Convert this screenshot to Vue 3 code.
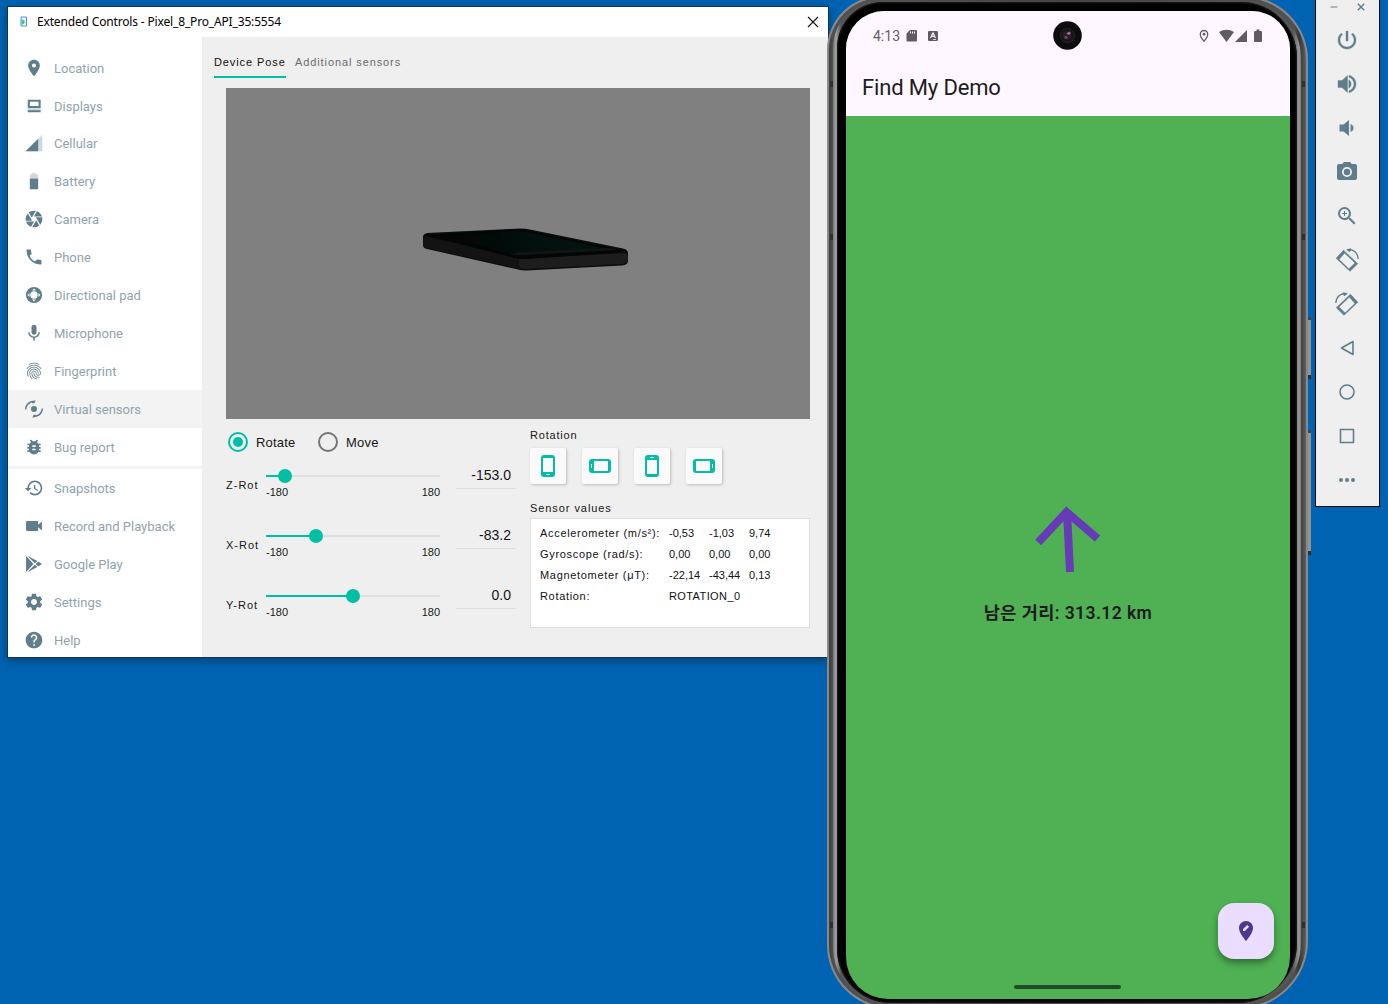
<script setup>
const pin = 'M12 2C8.13 2 5 5.13 5 9c0 5.25 7 13 7 13s7-7.75 7-13c0-3.87-3.13-7-7-7zm0 9.500a2.500 2.500 0 0 1 0-5 2.500 2.500 0 0 1 0 5z'
const menu = [
  { label: 'Location', paths: [pin] },
  { label: 'Displays', paths: ['M4.500 4.500h15.500v10H4.500zM7 7v5h10.500V7z', 'M4.500 17h15.500v2.500H4.500z'], faint: 'M4.500 14.500h15.500v2.500H4.500z' },
  { label: 'Cellular', paths: ['M17 7L2 22h15z'], faint: 'M2 22h20V2z', cls: 'pull' },
  { label: 'Battery', paths: ['M7 9v11.670C7 21.400 7.600 22 8.330 22h7.330c.740 0 1.340-.600 1.340-1.330V9H7z'], faint: 'M17 5.330C17 4.600 16.400 4 15.670 4H14V2h-4v2H8.330C7.600 4 7 4.600 7 5.330V9h10z' },
  { label: 'Camera', paths: ['M9.4 10.5l4.77-8.26C13.47 2.09 12.75 2 12 2c-2.4 0-4.6.85-6.32 2.25l3.66 6.35.06-.1zM21.54 9c-.92-2.92-3.15-5.26-6-6.34L11.88 9h9.66zm.26 1h-7.49l.29.5 4.76 8.25C21 16.97 22 14.61 22 12c0-.69-.07-1.35-.2-2zM8.54 12l-3.9-6.75C3.01 7.03 2 9.39 2 12c0 .69.07 1.35.2 2h7.49l-1.15-2zm-6.08 3c.92 2.92 3.15 5.26 6 6.34L12.12 15H2.46zm11.27 0l-3.9 6.76c.7.15 1.42.24 2.17.24 2.4 0 4.6-.85 6.32-2.25l-3.66-6.35-.93 1.6z'] },
  { label: 'Phone', paths: ['M6.62 10.79c1.44 2.83 3.76 5.14 6.59 6.59l2.2-2.2c.27-.27.67-.36 1.02-.24 1.12.37 2.33.57 3.57.57.55 0 1 .45 1 1V20c0 .55-.45 1-1 1-9.39 0-17-7.61-17-17 0-.55.45-1 1-1h3.5c.55 0 1 .45 1 1 0 1.25.2 2.45.57 3.57.11.35.03.74-.25 1.02l-2.2 2.2z'] },
  { label: 'Directional pad', paths: ['M12 2.300a9.700 9.700 0 1 0 0 19.400 9.700 9.700 0 0 0 0-19.400zM12 7.600a4.400 4.400 0 1 1 0 8.800 4.400 4.400 0 0 1 0-8.800zM12 4.300l2.300 2.300H9.700zM12 19.700l-2.300-2.300h4.600zM4.300 12l2.300-2.300v4.600zM19.700 12l-2.300 2.300V9.700z'] },
  { label: 'Microphone', paths: ['M12 14c1.66 0 2.99-1.34 2.99-3L15 5c0-1.66-1.34-3-3-3S9 3.34 9 5v6c0 1.66 1.34 3 3 3zm5.3-3c0 3-2.54 5.1-5.3 5.1S6.7 14 6.7 11H5c0 3.41 2.72 6.23 6 6.72V21h2v-3.28c3.28-.48 6-3.3 6-6.72h-1.7z'] },
  { label: 'Fingerprint', paths: ['M17.81 4.47c-.08 0-.16-.02-.23-.06C15.66 3.42 14 3 12.01 3c-1.98 0-3.86.47-5.57 1.41-.24.13-.54.04-.68-.2-.13-.24-.04-.55.2-.68C7.82 2.52 9.86 2 12.01 2c2.13 0 3.99.47 6.03 1.52.25.13.34.43.21.67-.09.18-.26.28-.44.28zM3.5 9.72c-.1 0-.2-.03-.29-.09-.23-.16-.28-.47-.12-.7.99-1.4 2.25-2.5 3.75-3.27C9.98 4.04 14 4.03 17.15 5.65c1.5.77 2.76 1.86 3.75 3.25.16.22.11.54-.12.7-.23.16-.54.11-.7-.12-.9-1.26-2.04-2.25-3.39-2.94-2.87-1.47-6.54-1.47-9.4.01-1.36.7-2.5 1.7-3.4 2.96-.08.14-.23.21-.39.21zm6.25 12.07c-.13 0-.26-.05-.35-.15-.87-.87-1.34-1.43-2.01-2.64-.69-1.23-1.05-2.73-1.05-4.34 0-2.97 2.54-5.39 5.66-5.39s5.66 2.42 5.66 5.39c0 .28-.22.5-.5.5s-.5-.22-.5-.5c0-2.42-2.09-4.39-4.66-4.39-2.57 0-4.66 1.97-4.66 4.39 0 1.44.32 2.77.93 3.85.64 1.15 1.08 1.64 1.85 2.42.19.2.19.51 0 .71-.11.1-.24.15-.37.15zm7.17-1.85c-1.19 0-2.24-.3-3.1-.89-1.49-1.01-2.38-2.65-2.38-4.39 0-.28.22-.5.5-.5s.5.22.5.5c0 1.41.72 2.74 1.94 3.56.71.48 1.54.71 2.54.71.24 0 .64-.03 1.04-.1.27-.05.53.13.58.41.05.27-.13.53-.41.58-.57.11-1.07.12-1.21.12zM14.91 22c-.04 0-.09-.01-.13-.02-1.59-.44-2.63-1.03-3.72-2.1-1.4-1.39-2.17-3.24-2.17-5.22 0-1.62 1.38-2.94 3.08-2.94 1.7 0 3.08 1.32 3.08 2.94 0 1.07.93 1.94 2.08 1.94s2.08-.87 2.08-1.94c0-3.77-3.25-6.83-7.25-6.83-2.84 0-5.44 1.58-6.61 4.03-.39.81-.59 1.76-.59 2.8 0 .78.07 2.01.67 3.61.1.26-.03.55-.29.64-.26.1-.55-.04-.64-.29-.49-1.31-.73-2.61-.73-3.96 0-1.2.23-2.29.68-3.24 1.33-2.79 4.28-4.6 7.51-4.6 4.55 0 8.25 3.51 8.25 7.83 0 1.62-1.38 2.94-3.08 2.94s-3.08-1.32-3.08-2.94c0-1.07-.93-1.94-2.08-1.94s-2.08.87-2.08 1.94c0 1.71.66 3.31 1.87 4.51.95.94 1.86 1.46 3.27 1.85.27.07.42.35.35.61-.05.23-.26.38-.47.38z'] },
  { label: 'Virtual sensors', active: true, paths: ['M12 8.400a3.600 3.600 0 1 0 0 7.200 3.600 3.600 0 0 0 0-7.200z', 'M1.200 12.500C1.200 7 5.500 2.500 11 2.200L14 1.500 12.500 5 9.500 5 10 4.200C6.300 5 3.200 8.200 2.800 12.500z', 'M22.800 11.500c0 5.500-4.300 10-9.800 10.300l-3 .7 1.500-3.500h3l-.5.800c3.700-.8 6.800-4 7.200-8.300z'] },
  { label: 'Bug report', paths: ['M20 8h-2.81c-.45-.78-1.07-1.45-1.82-1.96L17 4.41 15.59 3l-2.17 2.17C12.96 5.06 12.49 5 12 5c-.49 0-.96.06-1.41.17L8.41 3 7 4.41l1.62 1.63C7.88 6.55 7.26 7.22 6.81 8H4v2h2.09c-.05.33-.09.66-.09 1v1H4v2h2v1c0 .34.04.67.09 1H4v2h2.81c1.04 1.79 2.97 3 5.19 3s4.15-1.21 5.19-3H20v-2h-2.09c.05-.33.09-.66.09-1v-1h2v-2h-2v-1c0-.34-.04-.67-.09-1H20V8zm-6 8h-4v-2h4v2zm0-4h-4v-2h4v2z'] },
  { label: 'Snapshots', cls: 'divided', paths: ['M13 3a9 9 0 0 0-9 9H1l3.89 3.89.07.14L9 12H6c0-3.87 3.13-7 7-7s7 3.13 7 7-3.13 7-7 7c-1.93 0-3.68-.79-4.94-2.06l-1.42 1.42A8.954 8.954 0 0 0 13 21a9 9 0 0 0 0-18zm-1 5v5l4.28 2.54.72-1.21-3.5-2.08V8H12z'] },
  { label: 'Record and Playback', paths: ['M17 10.5V7c0-.55-.45-1-1-1H3.500c-.55 0-1 .45-1 1v10c0 .55.45 1 1 1H16c.55 0 1-.45 1-1v-3.5l4.500 4v-11l-4.500 4z'] },
  { label: 'Google Play', paths: ['M2.500 2.500v19l9-9.500z', 'M4 2l9 9 3-2.700z', 'M4 22l9-9 3 2.700z', 'M17 9l4.500 3-4.500 3-3-3z'] },
  { label: 'Settings', cls: 'gear', paths: ['M19.43 12.98c.04-.32.07-.64.07-.98s-.03-.66-.07-.98l2.110-1.650c.19-.15.24-.42.12-.64l-2-3.460c-.12-.22-.39-.3-.61-.22l-2.490 1c-.52-.4-1.080-.73-1.690-.98l-.38-2.650C14.460 2.180 14.250 2 14 2h-4c-.25 0-.46.18-.49.42l-.38 2.650c-.61.25-1.170.59-1.690.98l-2.490-1c-.23-.09-.49 0-.61.22l-2 3.460c-.13.22-.07.49.12.64l2.110 1.650c-.04.32-.07.65-.07.98s.03.66.07.98l-2.110 1.650c-.19.15-.24.42-.12.64l2 3.460c.12.22.39.3.61.22l2.490-1c.52.4 1.080.73 1.690.98l.38 2.650c.03.24.24.42.49.42h4c.25 0 .46-.18.49-.42l.38-2.650c.61-.25 1.170-.59 1.690-.98l2.490 1c.23.09.49 0 .61-.22l2-3.460c.12-.22.07-.49-.12-.64l-2.110-1.650zM12 15.500c-1.930 0-3.500-1.570-3.500-3.500s1.570-3.500 3.500-3.500 3.500 1.570 3.500 3.500-1.570 3.500-3.500 3.500z'] },
  { label: 'Help', paths: ['M12 2C6.480 2 2 6.480 2 12s4.480 10 10 10 10-4.480 10-10S17.520 2 12 2zm1 17h-2v-2h2v2zm2.070-7.750l-.9.920C13.450 12.900 13 13.500 13 15h-2v-.5c0-1.100.45-2.100 1.170-2.830l1.240-1.260c.37-.36.59-.86.59-1.410 0-1.100-.9-2-2-2s-2 .9-2 2H8c0-2.210 1.790-4 4-4s4 1.790 4 4c0 .88-.36 1.680-.93 2.250z'] }
]
const sliders = [
  { name: 'Z-Rot', value: '-153.0', at: 19 },
  { name: 'X-Rot', value: '-83.2', at: 50 },
  { name: 'Y-Rot', value: '0.0', at: 87 }
]
const turns = [0, 90, 180, 270]
const sensors = [
  ['Accelerometer (m/s²):', '-0,53', '-1,03', '9,74'],
  ['Gyroscope (rad/s):', '0,00', '0,00', '0,00'],
  ['Magnetometer (μT):', '-22,14', '-43,44', '0,13']
]
const marks = [85, 238, 926]
const tools = [
  { f: 'M13 3h-2v10h2V3zm4.830 2.170l-1.420 1.420C17.990 7.860 19 9.810 19 12c0 3.870-3.130 7-7 7s-7-3.130-7-7c0-2.190 1.010-4.140 2.580-5.420L6.170 5.170C4.230 6.820 3 9.260 3 12c0 4.970 4.030 9 9 9s9-4.030 9-9c0-2.740-1.230-5.180-3.170-6.830z', bold: true },
  { f: 'M3 8.500v7h4l5.500 5V3.500L7 8.500H3zm10.800-.8v8.600c1.500-.7 2.300-2.400 2.300-4.300s-.8-3.600-2.300-4.300zM14 3.230v2.060c2.890.86 5 3.540 5 6.710s-2.110 5.850-5 6.710v2.060c4.010-.91 7-4.490 7-8.770s-2.990-7.860-7-8.770z', bold: true },
  { f: 'M4.500 8.500v7h4l5.500 4.500V4L8.500 8.500zM15.500 8v8c1.900-.7 3-2.200 3-4s-1.100-3.300-3-4z' },
  { f: 'M12 8.800a3.200 3.200 0 1 0 0 6.400 3.200 3.200 0 0 0 0-6.400zM9 2L7.170 4H4c-1.100 0-2 .9-2 2v12c0 1.100.9 2 2 2h16c1.100 0 2-.9 2-2V6c0-1.100-.9-2-2-2h-3.170L15 2H9zm3 15a5 5 0 1 1 0-10 5 5 0 0 1 0 10z' },
  { f: 'M15.500 14h-.79l-.28-.27A6.471 6.471 0 0 0 16 9.500 6.500 6.500 0 1 0 9.500 16c1.610 0 3.090-.59 4.230-1.570l.27.28v.79l5 4.990L20.490 19l-4.990-5zm-6 0C7.010 14 5 11.990 5 9.500S7.010 5 9.500 5 14 7.010 14 9.500 11.990 14 9.500 14zM12 10h-2v2H9v-2H7V9h2V7h1v2h2v1z' },
  { rot: true },
  { rot: true, flip: true },
  { l: 'M18 5.500v13L6.500 12z' },
  { l: 'M12 5a7 7 0 1 0 0 14 7 7 0 0 0 0-14z' },
  { l: 'M6 5.500h12.500v13H5.500v-13z' },
  { f: 'M6 10a2 2 0 1 0 0 4 2 2 0 0 0 0-4zm6 0a2 2 0 1 0 0 4 2 2 0 0 0 0-4zm6 0a2 2 0 1 0 0 4 2 2 0 0 0 0-4z' }
]
</script>

<template>
  <div class="desktop">
    <section class="window">
      <header class="titlebar">
        <svg class="appicon" width="8" height="12" viewBox="0 0 8 12"><path d="M1 1h5.500v9H1z" fill="#f4fbff" stroke="#4f8cf5" /><path d="M1.500 3l2.500 1.200 1 1.500-1 2-2.500 1.200z" fill="#36d17b" /></svg>
        <span class="title">Extended Controls - Pixel_8_Pro_API_35:5554</span>
        <svg class="close" width="12" height="12" viewBox="0 0 12 12"><path d="M1 1l10 10M11 1L1 11" stroke="#111" stroke-width="1.100" /></svg>
      </header>
      <div class="body">
        <nav class="side">
          <div v-for="m in menu" :key="m.label" class="item" :class="[m.cls, { active: m.active }]">
            <svg width="20" height="20" viewBox="0 0 24 24" fill="#607d8b" fill-rule="evenodd">
              <path v-if="m.faint" :d="m.faint" opacity=".3" />
              <path v-for="p in m.paths" :key="p" :d="p" />
            </svg>
            <span>{{ m.label }}</span>
          </div>
        </nav>
        <main class="pane">
          <div class="tabs"><span class="tab on">Device Pose</span><span class="tab second">Additional sensors</span></div>
          <div class="scene">
            <svg width="210" height="46" viewBox="0 0 210 46">
              <defs>
                <linearGradient id="glass" x1="0" x2="1"><stop offset="0" stop-color="#020504" /><stop offset=".6" stop-color="#02110f" /><stop offset="1" stop-color="#02140f" /></linearGradient>
              </defs>
              <path d="M5 6Q1 7 1 10v8q0 3 4 4l89 20q5 1.500 11 1.500l95-5q6-.500 6-5v-7q0-4-5-5L108 2.500Q101 1 88 2z" fill="#0c0c0d" />
              <path d="M2 9l94 22q4 1 4 11l-6-1L5 21q-4-1-4-4z" fill="#131313" />
              <path d="M97 32l106-6q3 1 3 4v2q0 4-6 5l-95 5q-8 0-8-4z" fill="#1d1d1d" />
              <path d="M3 8L88 2.500q10-1 17 1l97 20q-5 2-12 2.500l-87 6q-5 0-10-1z" fill="#040505" />
              <path d="M26 9l68-5 10 1 82 17-97 5z" fill="url(#glass)" />
              <path d="M88 28l10-3 92-4 6 2-92 5z" fill="#101514" />
            </svg>
          </div>
          <div class="controls">
            <div class="left">
              <div class="radios">
                <span class="radio on"><i></i></span><span class="rl">Rotate</span>
                <span class="radio"></span><span class="rl">Move</span>
              </div>
              <div v-for="s in sliders" :key="s.name" class="srow">
                <span class="sname">{{ s.name }}</span>
                <div class="slider">
                  <div class="track"><div class="fill" :style="{ width: s.at + 'px' }"><b></b></div></div>
                  <div class="ends"><span>-180</span><span>180</span></div>
                </div>
                <span class="sval">{{ s.value }}</span>
              </div>
            </div>
            <div class="right">
              <div class="cap">Rotation</div>
              <div class="turns">
                <div v-for="t in turns" :key="t" class="turn">
                  <svg width="24" height="24" viewBox="0 0 24 24" :style="{ transform: `rotate(${t}deg)` }"><path fill="#00bfa5" fill-rule="evenodd" d="M8 1h8q3 0 3 3v16q0 3-3 3H8q-3 0-3-3V4q0-3 3-3zM7 4v14h10V4zM10 20v1h4v-1z" /></svg>
                </div>
              </div>
              <div class="cap values">Sensor values</div>
              <div class="table">
                <div v-for="r in sensors" :key="r[0]" class="trow"><span v-for="(c, i) in r" :key="i">{{ c }}</span></div>
                <div class="trow"><span>Rotation:</span><span class="state">ROTATION_0</span></div>
              </div>
            </div>
          </div>
        </main>
      </div>
    </section>

    <section class="phone">
      <i class="key k1"></i><i class="key k2"></i>
      <div class="rim"><div class="groove"><div class="band"><div class="bezel"></div></div></div></div>
      <i v-for="y in marks" :key="y" class="mark l" :style="{ top: y + 'px' }"></i>
      <i v-for="y in marks" :key="'r' + y" class="mark r" :style="{ top: y + 'px' }"></i>
      <div class="screen">
        <div class="appbar">
          <div class="status">
            <span class="clock">4:13</span>
            <svg width="12" height="14" viewBox="0 0 12 14"><path fill="#5f5c61" fill-rule="evenodd" d="M4 1h6q1 0 1 1v9.500q0 1-1 1H1.500q-1 0-1-1V4.500zM4 2.500v2h1v-2zM6 2.500v2h1v-2zM8 2.500v2h1v-2z" /></svg>
            <svg class="abox" width="10" height="12" viewBox="0 0 10 12"><path fill="#5f5c61" fill-rule="evenodd" d="M1 1h8q1 0 1 1v8q0 1-1 1H1q-1 0-1-1V2q0-1 1-1zM4.300 2.500L2 8h1.300l.5-1.200h2.300L6.600 8h1.300L5.700 2.500zM4.300 5.700L5 4l.7 1.700zM5 9v.8h3V9z" /></svg>
            <span class="grow"></span>
            <svg class="spot" width="10" height="14" viewBox="0 0 10 14"><path d="M5 1.500a3.700 3.700 0 0 0-3.700 3.700C1.300 8 5 12.300 5 12.300s3.700-4.300 3.700-7.100A3.700 3.700 0 0 0 5 1.500z" fill="none" stroke="#5f5c61" stroke-width="1.300" /><circle cx="5" cy="5.200" r="1.400" fill="#5f5c61" /></svg>
            <svg width="15" height="14" viewBox="0 0 15 14"><path d="M0 3Q7.500-1.500 15 3L7.500 13z" fill="#5f5c61" /></svg>
            <svg class="sig" width="12" height="14" viewBox="0 0 12 14"><path d="M12 1v12H0z" fill="#5f5c61" /></svg>
            <svg width="8" height="14" viewBox="0 0 8 14"><path d="M2.500.500h3V2H7q1 0 1 1v9q0 1-1 1H1q-1 0-1-1V3q0-1 1-1h1.500z" fill="#5f5c61" /></svg>
          </div>
          <h1>Find My Demo</h1>
        </div>
        <div class="stage">
          <svg class="arrow" width="66" height="68" viewBox="0 0 66 68"><path d="M3.200 36.500L31.500 6 62.500 32.500M32 5l3 61" fill="none" stroke="#673ab7" stroke-width="8" /></svg>
          <div class="dist">남은 거리: 313.12 km</div>
        </div>
        <div class="lens"><svg width="30" height="30" viewBox="0 0 30 30"><circle cx="14.500" cy="14.500" r="14.300" fill="#0c0c0c" /><circle cx="14.500" cy="14.500" r="7" fill="#161416" stroke="#262426" /><circle cx="14" cy="14.500" r="4.500" fill="#2b1c2a" /><path d="M13.500 12l3.500-1.500.8 2.500-2.500 1z" fill="#a06a9a" /><circle cx="13" cy="16.300" r="1.600" fill="#5f5052" /></svg></div>
        <div class="fab"><svg width="24" height="24" viewBox="0 0 24 24"><path d="M12 2C8.130 2 5 5.130 5 9c0 5.250 7 13 7 13s7-7.750 7-13c0-3.870-3.130-7-7-7z" fill="#4f378b" /><path d="M9 12v-1.900l4.200-4.200 1.900 1.900-4.200 4.200z" fill="#eaddff" /></svg></div>
        <div class="home"></div>
      </div>
    </section>

    <aside class="toolbar">
      <div class="winbtns">
        <svg width="8" height="8" viewBox="0 0 8 8"><path d="M.500 4h7" stroke="#93a5ae" stroke-width="1.500" /></svg>
        <svg width="8" height="8" viewBox="0 0 8 8"><path d="M.800.800l6.400 6.400M7.200.800L.800 7.200" stroke="#607d8b" stroke-width="1.400" /></svg>
      </div>
      <div v-for="(t, i) in tools" :key="i" class="tool">
        <svg v-if="t.rot" width="24" height="24" viewBox="0 0 24 24" :style="{ transform: t.flip ? 'scaleX(-1)' : 'none' }">
          <path fill="#607d8b" fill-rule="evenodd" stroke="#607d8b" stroke-width=".6" stroke-linejoin="round" d="M1.200 10.300L8.500 2.300 22.700 15.700 15 23.300zM4 11.500L13.900 20.900 20 14.900 9.600 5z" />
          <path fill="none" stroke="#607d8b" stroke-width="1.300" d="M12.500 1.700C18 .800 22.800 4.600 23.200 11" />
          <path fill="#607d8b" d="M11.200 1.600l4.300-1.300 1 1-1.800 3z" />
        </svg>
        <svg v-else width="24" height="24" viewBox="0 0 24 24">
          <path v-if="t.f" :d="t.f" fill="#607d8b" fill-rule="evenodd" :stroke="t.bold ? '#607d8b' : 'none'" stroke-width=".4" />
          <path v-else :d="t.l" fill="none" stroke="#607d8b" stroke-width="1.600" stroke-linejoin="round" />
        </svg>
      </div>
    </aside>
  </div>
</template>

<style>
body { margin: 0; overflow: hidden; }
</style>

<style scoped>
.desktop { position: relative; width: 1388px; height: 1004px; overflow: hidden; background: #0063b1; font-family: "Liberation Sans", sans-serif; }
.desktop * { box-sizing: border-box; }
svg { display: block; flex: none; }
.window { position: absolute; left: 7px; top: 6px; width: 822px; height: 652px; border: 1px solid #12344f; background: #efefef; box-shadow: 0 3px 9px rgba(0, 0, 0, .35); display: flex; flex-direction: column; }
.titlebar { height: 30px; background: #fff; display: flex; align-items: center; padding: 0 9px 1px 12px; }
.title { margin-left: 9px; font: 12px/16px "Noto Sans", sans-serif; letter-spacing: -.160px; color: #000; flex: 1; white-space: nowrap; }
.body { flex: 1; display: flex; min-height: 0; }
.side { width: 194px; background: #fff; padding-top: 12px; overflow: hidden; }
.item { height: 38px; display: flex; align-items: center; padding-left: 16px; font: 13px/18px Roboto, sans-serif; color: #90a4ae; }
.item span { margin-left: 10px; padding-top: 1px; white-space: nowrap; }
.item.pull { margin-top: -1px; }
.item.active { background: #f3f3f3; }
.item.divided { border-top: 3px solid #f3f3f3; height: 41px; }
.pane { flex: 1; min-width: 0; padding: 14px 17px 0 12px; }
.tabs { display: flex; height: 37px; }
.tab { height: 27px; font-size: 11px; line-height: 23px; letter-spacing: .9px; color: #6b6b6b; white-space: nowrap; }
.tab.on { width: 72px; color: #111; border-bottom: 2px solid #00bfa5; }
.second { margin-left: 9px; }
.scene { margin-left: 12px; width: 584px; height: 331px; background: #808080; display: flex; padding: 139px 0 0 196px; }
.controls { display: flex; margin-left: 12px; }
.left { width: 304px; }
.radios { display: flex; align-items: center; height: 46px; padding-left: 2px; color: #161616; }
.radio { width: 20px; height: 20px; border: 2px solid #757575; border-radius: 50%; display: flex; align-items: center; justify-content: center; }
.radio.on { border-color: #00bfa5; }
.radio i { width: 10px; height: 10px; border-radius: 50%; background: #00bfa5; }
.rl { font-size: 13px; margin-left: 8px; width: 62px; letter-spacing: .2px; }
.srow { height: 60px; display: flex; color: #161616; }
.sname { width: 40px; padding-top: 13px; font-size: 11px; line-height: 14px; letter-spacing: 1px; }
.slider { width: 174px; padding-top: 10px; }
.track { height: 2px; background: #dedede; }
.fill { height: 2px; background: #00bfa5; display: flex; align-items: center; justify-content: flex-end; }
.fill b { width: 14px; height: 14px; border-radius: 50%; background: #00bfa5; margin-right: -7px; flex: none; }
.ends { display: flex; justify-content: space-between; font-size: 11px; line-height: 14px; padding-top: 8px; }
.sval { margin-left: 16px; width: 60px; height: 24px; border-bottom: 1px solid #dedede; font-size: 14px; line-height: 20px; text-align: right; padding-right: 5px; }
.cap { font-size: 11px; line-height: 14px; letter-spacing: .8px; padding-top: 9px; color: #161616; height: 29px; }
.turns { display: flex; gap: 16px; }
.turn { width: 36px; height: 36px; background: #fafafa; border-radius: 2px; box-shadow: 1px 1px 3px rgba(0, 0, 0, .22); display: flex; align-items: center; justify-content: center; }
.values { height: 34px; padding-top: 17px; letter-spacing: .930px; }
.table { width: 280px; height: 110px; background: #fff; border: 1px solid #dedede; padding: 4px 9px; color: #111; }
.trow { height: 21px; display: grid; grid-template-columns: 129px 40px 40px 40px; font-size: 11px; line-height: 21px; white-space: nowrap; }
.trow span:first-child { letter-spacing: .68px; }
.state { letter-spacing: .4px; }
.phone { position: absolute; left: 827px; top: -4px; width: 484px; height: 1016px; }
.rim { width: 481px; height: 1013px; padding: 2px; border-radius: 54px 64px 68px 64px; background: #898989; }
.groove { height: 100%; padding: 2px 5px 2px 4px; border-radius: 52px 62px 66px 62px; background: linear-gradient(90deg, #3c3c3c, #505050 4px, #505050 466px, #333 470px, #606060); }
.band { height: 100%; padding: 2px 4px; border-radius: 48px 58px 62px 58px; background: linear-gradient(90deg, #777, #a0a0a0 3px, #555 8px, #444 50%, #555 460px, #999 466px, #777); }
.bezel { height: 100%; border-radius: 46px 56px 60px 54px; background: #000; box-shadow: inset 0 0 2px 1px #1d1d1d; }
.mark { position: absolute; width: 3px; height: 6px; background: #303030; }
.mark.l { left: 3px; }
.mark.r { right: 6px; }
.key { position: absolute; right: 0; width: 3px; background: #929292; border-top: 3px solid #444; border-bottom: 4px solid #303030; }
.k1 { top: 321px; height: 62px; }
.k2 { top: 434px; height: 125px; }
.screen { position: absolute; left: 19px; top: 15px; width: 444px; height: 988px; background: #4fb154; border-radius: 38px 38px 42px 42px; overflow: hidden; display: flex; flex-direction: column; }
.appbar { height: 105px; background: #fef7ff; }
.status { height: 49px; display: flex; align-items: center; padding: 1px 28px 0 27px; }
.clock { font: 14px/18px Roboto, sans-serif; color: #625f64; width: 33px; white-space: nowrap; }
.abox { margin-left: 10px; }
.grow { flex: 1; }
.spot { margin-right: 10px; }
.sig { margin: 0 7px 0 1px; }
h1 { margin: 14px 0 0 16px; font: 400 22px/28px Roboto, sans-serif; color: #1d1b20; letter-spacing: -.150px; }
.stage { flex: 1; display: flex; flex-direction: column; align-items: center; padding-top: 390px; }
.dist { margin-top: 28px; font: 600 17.500px/22px Roboto, "Noto Sans CJK KR", sans-serif; color: #1d1b20; letter-spacing: .42px; white-space: nowrap; }
.lens { position: absolute; left: 207px; top: 10px; }
.fab { position: absolute; right: 16px; top: 892px; width: 56px; height: 56px; border-radius: 16px; background: #eaddff; display: flex; align-items: center; justify-content: center; box-shadow: 0 4px 7px rgba(0, 0, 0, .38); }
.home { position: absolute; left: 168px; bottom: 10px; width: 107px; height: 4px; border-radius: 2px; background: #1f4a25; }
.toolbar { position: absolute; left: 1315px; top: -4px; width: 65px; height: 511px; background: #efefef; border: 1px solid #050505; }
.winbtns { display: flex; justify-content: space-between; padding: 6px 14px 0; height: 21px; }
.tool { height: 44px; display: flex; align-items: center; justify-content: center; padding-right: 1px; }
</style>
